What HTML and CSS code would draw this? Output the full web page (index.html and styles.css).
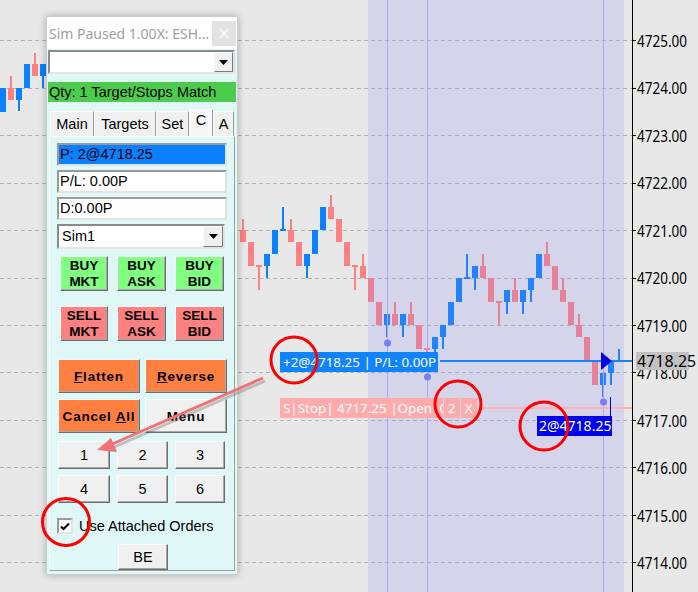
FILE: index.html
```html
<!DOCTYPE html>
<html>
<head>
<meta charset="utf-8">
<link rel="stylesheet" href="styles.css">
</head>
<body>
<div class="stage">
  <svg class="chart" width="698" height="592" viewBox="0 0 698 592">
    <g class="grid" stroke="#b2b2b2" stroke-width="1" stroke-dasharray="4 3">
      <line x1="0" y1="40.5" x2="632" y2="40.5"/>
      <line x1="0" y1="88.5" x2="632" y2="88.5"/>
      <line x1="0" y1="135.5" x2="632" y2="135.5"/>
      <line x1="0" y1="183.5" x2="632" y2="183.5"/>
      <line x1="0" y1="230.5" x2="632" y2="230.5"/>
      <line x1="0" y1="278.5" x2="632" y2="278.5"/>
      <line x1="0" y1="325.5" x2="632" y2="325.5"/>
      <line x1="0" y1="372.5" x2="632" y2="372.5"/>
      <line x1="0" y1="420.5" x2="632" y2="420.5"/>
      <line x1="0" y1="467.5" x2="632" y2="467.5"/>
      <line x1="0" y1="515.5" x2="632" y2="515.5"/>
      <line x1="0" y1="562.5" x2="632" y2="562.5"/>
    </g>
    <g class="red" fill="#ff8080">
      <rect x="8" y="88" width="6" height="12"/><rect x="10" y="76" width="2" height="12"/>
      <rect x="32" y="64" width="6" height="12"/><rect x="34" y="53" width="2" height="11"/>
      <rect x="240" y="230" width="6" height="12"/><rect x="242" y="219" width="2" height="11"/>
      <rect x="248" y="242" width="6" height="24"/>
      <rect x="256" y="265" width="6" height="2"/><rect x="258" y="266" width="2" height="24"/>
      <rect x="288" y="230" width="6" height="12"/><rect x="290" y="219" width="2" height="11"/>
      <rect x="296" y="242" width="6" height="24"/>
      <rect x="328" y="207" width="6" height="12"/><rect x="330" y="195" width="2" height="12"/>
      <rect x="336" y="219" width="6" height="23"/>
      <rect x="344" y="242" width="6" height="24"/>
      <rect x="352" y="265" width="6" height="2"/><rect x="354" y="266" width="2" height="24"/>
      <rect x="360" y="266" width="6" height="12"/><rect x="362" y="254" width="2" height="12"/>
      <rect x="368" y="278" width="6" height="24"/>
      <rect x="376" y="302" width="6" height="23"/>
      <rect x="392" y="314" width="6" height="11"/><rect x="394" y="302" width="2" height="12"/>
      <rect x="408" y="314" width="6" height="11"/><rect x="410" y="302" width="2" height="12"/>
      <rect x="416" y="325" width="6" height="24"/>
      <rect x="424" y="348" width="6" height="2"/><rect x="426" y="349" width="2" height="12"/>
      <rect x="480" y="266" width="6" height="12"/><rect x="482" y="254" width="2" height="12"/>
      <rect x="488" y="278" width="6" height="24"/>
      <rect x="496" y="301" width="6" height="2"/><rect x="498" y="302" width="2" height="23"/>
      <rect x="512" y="290" width="6" height="12"/><rect x="514" y="278" width="2" height="12"/>
      <rect x="544" y="254" width="6" height="12"/><rect x="546" y="242" width="2" height="12"/>
      <rect x="552" y="266" width="6" height="24"/>
      <rect x="560" y="290" width="6" height="12"/><rect x="562" y="278" width="2" height="12"/>
      <rect x="568" y="302" width="6" height="23"/>
      <rect x="576" y="325" width="6" height="12"/><rect x="578" y="314" width="2" height="11"/>
      <rect x="584" y="337" width="6" height="24"/>
      <rect x="592" y="361" width="6" height="24"/>
    </g>
    <g class="blue" fill="#0a82ff">
      <rect x="0" y="88" width="6" height="24"/>
      <rect x="16" y="88" width="6" height="12"/><rect x="18" y="100" width="2" height="11"/>
      <rect x="24" y="64" width="6" height="24"/>
      <rect x="40" y="64" width="6" height="12"/><rect x="42" y="76" width="2" height="12"/>
      <rect x="264" y="254" width="6" height="12"/><rect x="266" y="266" width="2" height="12"/>
      <rect x="272" y="230" width="6" height="24"/>
      <rect x="282" y="207" width="2" height="23"/><rect x="280" y="229" width="6" height="2"/>
      <rect x="304" y="254" width="6" height="12"/><rect x="306" y="266" width="2" height="12"/>
      <rect x="312" y="230" width="6" height="24"/>
      <rect x="320" y="207" width="6" height="23"/>
      <rect x="384" y="314" width="6" height="11"/><rect x="386" y="325" width="2" height="12"/>
      <rect x="400" y="314" width="6" height="11"/><rect x="402" y="325" width="2" height="12"/>
      <rect x="432" y="337" width="6" height="12"/><rect x="434" y="349" width="2" height="12"/>
      <rect x="440" y="325" width="6" height="12"/><rect x="442" y="337" width="2" height="12"/>
      <rect x="448" y="302" width="6" height="23"/>
      <rect x="456" y="278" width="6" height="24"/>
      <rect x="466" y="254" width="2" height="24"/><rect x="464" y="277" width="6" height="2"/>
      <rect x="472" y="266" width="6" height="12"/><rect x="474" y="278" width="2" height="12"/>
      <rect x="504" y="290" width="6" height="12"/><rect x="506" y="302" width="2" height="12"/>
      <rect x="520" y="290" width="6" height="12"/><rect x="522" y="302" width="2" height="12"/>
      <rect x="528" y="278" width="6" height="12"/><rect x="530" y="290" width="2" height="12"/>
      <rect x="536" y="254" width="6" height="24"/>
      <rect x="600" y="373" width="6" height="12"/><rect x="602" y="385" width="2" height="12"/>
      <rect x="608" y="361" width="6" height="12"/><rect x="610" y="373" width="2" height="12"/>
      <rect x="618" y="349" width="2" height="12"/>
    </g>
    <rect class="session" x="368" y="0" width="256" height="592" fill="rgb(137,137,252)" fill-opacity="0.2"/>
    <g stroke="#aaaae6" stroke-width="1">
      <line x1="387.5" y1="0" x2="387.5" y2="592"/>
      <line x1="427.5" y1="0" x2="427.5" y2="592"/>
      <line x1="603.5" y1="0" x2="603.5" y2="592"/>
    </g>
    <g fill="#7a7aff">
      <circle cx="387.5" cy="343" r="3.5"/>
      <circle cx="427.5" cy="377" r="3.5"/>
      <circle cx="603.5" cy="402" r="3.5"/>
    </g>
    <rect x="440" y="360" width="192" height="2" fill="#1084ff"/>
    <rect x="480" y="407" width="152" height="2" fill="#ffb0b0"/>
    <line x1="610.5" y1="397" x2="610.5" y2="417" stroke="#0000ff" stroke-width="1"/>
    <polygon points="601,352 601,370 612,361" fill="#0000e6"/>
    <line x1="632.5" y1="0" x2="632.5" y2="592" stroke="#000" stroke-width="1"/>
    <g stroke="#000" stroke-width="1">
      <line x1="633" y1="40.5" x2="636" y2="40.5"/>
      <line x1="633" y1="88.5" x2="636" y2="88.5"/>
      <line x1="633" y1="135.5" x2="636" y2="135.5"/>
      <line x1="633" y1="183.5" x2="636" y2="183.5"/>
      <line x1="633" y1="230.5" x2="636" y2="230.5"/>
      <line x1="633" y1="278.5" x2="636" y2="278.5"/>
      <line x1="633" y1="325.5" x2="636" y2="325.5"/>
      <line x1="633" y1="372.5" x2="636" y2="372.5"/>
      <line x1="633" y1="420.5" x2="636" y2="420.5"/>
      <line x1="633" y1="467.5" x2="636" y2="467.5"/>
      <line x1="633" y1="515.5" x2="636" y2="515.5"/>
      <line x1="633" y1="562.5" x2="636" y2="562.5"/>
    </g>
    <g class="axis-text" font-size="16" fill="#000">
      <text x="637" y="46.5" textLength="50" lengthAdjust="spacingAndGlyphs">4725.00</text>
      <text x="637" y="94" textLength="50" lengthAdjust="spacingAndGlyphs">4724.00</text>
      <text x="637" y="141.5" textLength="50" lengthAdjust="spacingAndGlyphs">4723.00</text>
      <text x="637" y="189" textLength="50" lengthAdjust="spacingAndGlyphs">4722.00</text>
      <text x="637" y="236.5" textLength="50" lengthAdjust="spacingAndGlyphs">4721.00</text>
      <text x="637" y="284" textLength="50" lengthAdjust="spacingAndGlyphs">4720.00</text>
      <text x="637" y="331.5" textLength="50" lengthAdjust="spacingAndGlyphs">4719.00</text>
      <text x="637" y="379" textLength="50" lengthAdjust="spacingAndGlyphs">4718.00</text>
      <text x="637" y="426.5" textLength="50" lengthAdjust="spacingAndGlyphs">4717.00</text>
      <text x="637" y="474" textLength="50" lengthAdjust="spacingAndGlyphs">4716.00</text>
      <text x="637" y="521.5" textLength="50" lengthAdjust="spacingAndGlyphs">4715.00</text>
      <text x="637" y="569" textLength="50" lengthAdjust="spacingAndGlyphs">4714.00</text>
    </g>
  </svg>

  <div class="lbl lbl-pos">+2@4718.25 | P/L: 0.00P</div>
  <div class="lbl lbl-stop"><span class="stop-main">S|Stop| 4717.25 |Open|0</span><span class="stop-btn">2</span><span class="stop-btn">X</span></div>
  <div class="lbl lbl-fill">2@4718.25</div>
  <div class="lbl axis-cur">4718.25</div>

  <div class="win">
    <div class="titlebar">
      <span class="title">Sim Paused 1.00X: ESH...</span>
      <span class="close">×</span>
    </div>
    <div class="combo top-combo">
      <span class="combo-text"></span>
      <span class="dd"><svg width="9" height="5" viewBox="0 0 9 5"><polygon points="0,0 9,0 4.5,5" fill="#000"/></svg></span>
    </div>
    <div class="status">Qty: 1 Target/Stops Match</div>
    <div class="tabs">
      <span class="tab t-main">Main</span>
      <span class="tab t-targets">Targets</span>
      <span class="tab t-set">Set</span>
      <span class="tab t-c active">C</span>
      <span class="tab t-a">A</span>
    </div>
    <div class="tabpanel">
      <div class="field sel">P: 2@4718.25</div>
      <div class="field">P/L: 0.00P</div>
      <div class="field">D:0.00P</div>
      <div class="combo acct">
        <span class="combo-text">Sim1</span>
        <span class="dd"><svg width="9" height="5" viewBox="0 0 9 5"><polygon points="0,0 9,0 4.5,5" fill="#000"/></svg></span>
      </div>
      <div class="row3 trade-row buy-row">
        <div class="btn buy"><span>BUY<br>MKT</span></div>
        <div class="btn buy"><span>BUY<br>ASK</span></div>
        <div class="btn buy"><span>BUY<br>BID</span></div>
      </div>
      <div class="row3 trade-row sell-row">
        <div class="btn sell"><span>SELL<br>MKT</span></div>
        <div class="btn sell"><span>SELL<br>ASK</span></div>
        <div class="btn sell"><span>SELL<br>BID</span></div>
      </div>
      <div class="row2 flat-row">
        <div class="btn orange"><span><u>F</u>latten</span></div>
        <div class="btn orange"><span><u>R</u>everse</span></div>
      </div>
      <div class="row2 cancel-row">
        <div class="btn orange"><span>Cancel <u>A</u>ll</span></div>
        <div class="btn grey"><span>Menu</span></div>
      </div>
      <div class="rownum num-row1">
        <div class="btn num">1</div>
        <div class="btn num">2</div>
        <div class="btn num">3</div>
      </div>
      <div class="rownum num-row2">
        <div class="btn num">4</div>
        <div class="btn num">5</div>
        <div class="btn num">6</div>
      </div>
      <div class="check-row">
        <span class="checkbox"><svg width="10" height="9" viewBox="0 0 10 9"><polyline points="1,4.5 3.5,7 9,1.5" fill="none" stroke="#000" stroke-width="2"/></svg></span>
        <span class="check-label">Use Attached Orders</span>
      </div>
      <div class="btn num be">BE</div>
    </div>
  </div>

  <svg class="annot" width="698" height="592" viewBox="0 0 698 592">
    <g fill="none" stroke="#ff0000" stroke-width="3">
      <circle cx="294" cy="360" r="23"/>
      <circle cx="458" cy="404" r="23"/>
      <circle cx="544" cy="426" r="24"/>
      <circle cx="66" cy="522" r="23.5"/>
    </g>
    <g opacity="0.35" transform="translate(2,3)">
      <line x1="263" y1="378" x2="110" y2="445" stroke="#666" stroke-width="3"/>
    </g>
    <line x1="263" y1="378" x2="110" y2="445" stroke="#f07272" stroke-width="3"/>
    <polygon points="97,450 111,438 117,452" fill="#f07272"/>
  </svg>
</div>
</body>
</html>
```

FILE: styles.css
```css
* { box-sizing: border-box; }
html, body { margin: 0; padding: 0; }
body {
  width: 698px;
  height: 592px;
  overflow: hidden;
  background: #e8e8e8;
  font-family: "Liberation Sans", Arial, sans-serif;
}
.stage {
  position: relative;
  width: 698px;
  height: 592px;
  overflow: hidden;
  background: #e8e8e8;
}
.chart, .annot {
  position: absolute;
  left: 0;
  top: 0;
}
.annot { pointer-events: none; }
.axis-text { font-family: "Noto Sans", "Open Sans", sans-serif; }

.lbl {
  position: absolute;
  font-family: "Noto Sans", "Open Sans", sans-serif;
  font-size: 13.4px;
  line-height: 20px;
  color: #fff;
  white-space: nowrap;
}
.lbl-pos {
  left: 280px;
  top: 352px;
  height: 20px;
  padding: 0 2px 0 3px;
  background: #1084ff;
}
.lbl-stop {
  left: 280px;
  top: 398px;
  display: flex;
  gap: 1px;
}
.stop-main {
  display: block;
  width: 163px;
  height: 20px;
  overflow: hidden;
  padding-left: 3px;
  background: #ffabab;
}
.stop-btn {
  display: block;
  height: 20px;
  padding: 0 4px;
  background: #ffabab;
}
.lbl-fill {
  left: 537px;
  top: 416px;
  width: 75px;
  height: 20px;
  padding-left: 2px;
  background: #0000f0;
  font-size: 14px;
}
.axis-cur {
  left: 636px;
  top: 352px;
  width: 53px;
  height: 18px;
  line-height: 18px;
  padding-left: 1px;
  background: #c2c2c2;
  color: #000;
  font-size: 16px;
}

/* trade window */
.win {
  position: absolute;
  left: 46px;
  top: 16px;
  width: 192px;
  height: 559px;
  background: #dff7f7;
  border: 1px solid #c9cfcf;
  box-shadow: 0 0 7px rgba(0, 0, 0, 0.28);
  display: flex;
  flex-direction: column;
}
.titlebar {
  height: 32px;
  background: #fff;
  display: flex;
  align-items: center;
  justify-content: space-between;
  padding-left: 2px;
}
.title {
  font-family: "Noto Sans", "Open Sans", sans-serif;
  font-size: 14px;
  color: #a0a0a0;
  white-space: nowrap;
}
.close {
  width: 24px;
  height: 25px;
  margin-right: 1px;
  background: #e2e2e2;
  color: #f8f8f8;
  font-family: "DejaVu Sans", sans-serif;
  font-size: 17px;
  display: flex;
  align-items: center;
  justify-content: center;
}
.combo {
  display: flex;
  justify-content: space-between;
  align-items: stretch;
  background: #fff;
  border: 2px solid;
  border-color: #8a8a8a #e4e4e4 #e4e4e4 #8a8a8a;
}
.top-combo {
  margin: 1px 0 0 1px;
  width: 187px;
  height: 24px;
}
.combo-text {
  font-size: 14.5px;
  padding-left: 3px;
  line-height: 20px;
}
.dd {
  width: 19px;
  background: #f0f0f0;
  border: 1px solid;
  border-color: #fafafa #7a7a7a #7a7a7a #fafafa;
  display: flex;
  align-items: center;
  justify-content: center;
}
.status {
  margin: 8px 0 0 1px;
  width: 188px;
  height: 20px;
  background: #4ccc4c;
  font-size: 14.5px;
  line-height: 20px;
  padding-left: 1px;
  color: #000;
  white-space: nowrap;
}
.tabs {
  margin: 8px 0 0 3px;
  height: 26px;
  display: flex;
  align-items: flex-end;
}
.tab {
  height: 25px;
  background: #f0f0f0;
  border: 1px solid;
  border-bottom: none;
  border-color: #fcfcfc #9a9a9a #9a9a9a #fcfcfc;
  font-size: 14.5px;
  line-height: 24px;
  text-align: center;
  color: #000;
}
.t-main { width: 44px; }
.t-targets { width: 62px; }
.t-set { width: 33px; }
.t-c { width: 24px; }
.t-a { width: 21px; }
.tab.active {
  height: 27px;
  background: #f7f7f7;
  line-height: 20px;
}
.tabpanel {
  margin: 0 0 3px 2px;
  width: 186px;
  flex: 1;
  border: 1px solid;
  border-color: #fbfbfb #a0a0a0 #a0a0a0 #fbfbfb;
  padding: 6px 0 0 7px;
  display: flex;
  flex-direction: column;
}
.field {
  width: 170px;
  height: 23px;
  margin-bottom: 4px;
  background: #fff;
  border: 2px solid;
  border-color: #9a9a9a #e2e2e2 #e2e2e2 #9a9a9a;
  font-size: 14.5px;
  line-height: 19px;
  padding-left: 1px;
  color: #000;
}
.field.sel { background: #0a80ff; }
.acct {
  width: 168px;
  height: 25px;
}
.acct .dd { width: 20px; }
.btn {
  display: flex;
  align-items: center;
  justify-content: center;
  text-align: center;
  border: 1px solid;
  border-color: #fbfbfb #6c6c6c #6c6c6c #fbfbfb;
  box-shadow: inset -1px -1px 0 #a8a8a8;
  color: #000;
}
.row3 {
  display: grid;
  grid-template-columns: 48px 49px 49px;
  column-gap: 9px;
  margin-left: 3px;
  height: 35px;
}
.buy-row { margin-top: 7px; }
.sell-row { margin-top: 15px; }
.trade-row .btn {
  font-weight: bold;
  font-size: 13.5px;
  line-height: 16px;
}
.buy { background: #80ff80; }
.sell { background: #ff8080; }
.row2 {
  display: grid;
  grid-template-columns: 82px 82px;
  column-gap: 5px;
  margin-left: 1px;
  height: 34px;
}
.row2 .btn {
  font-weight: bold;
  font-size: 13.5px;
  letter-spacing: 0.8px;
}
.flat-row { margin-top: 18px; }
.cancel-row { margin-top: 6px; }
.orange { background: #ff8040; }
.grey { background: #f0f0f0; }
.rownum {
  display: grid;
  grid-template-columns: 52px 51px 50px;
  column-gap: 7px;
  margin-left: 1px;
  height: 28px;
}
.num-row1 { margin-top: 8px; }
.num-row2 { margin-top: 6px; }
.num {
  background: #f0f0f0;
  font-size: 14.5px;
}
.check-row {
  margin-top: 15px;
  height: 16px;
  display: flex;
  align-items: center;
}
.checkbox {
  width: 16px;
  height: 16px;
  background: #fff;
  border: 2px solid;
  border-color: #9a9a9a #e4e4e4 #e4e4e4 #9a9a9a;
  display: flex;
  align-items: center;
  justify-content: center;
}
.check-label {
  margin-left: 6px;
  font-size: 14.5px;
  color: #000;
  white-space: nowrap;
}
.be {
  margin: 10px 0 0 61px;
  width: 50px;
  height: 26px;
}
```
